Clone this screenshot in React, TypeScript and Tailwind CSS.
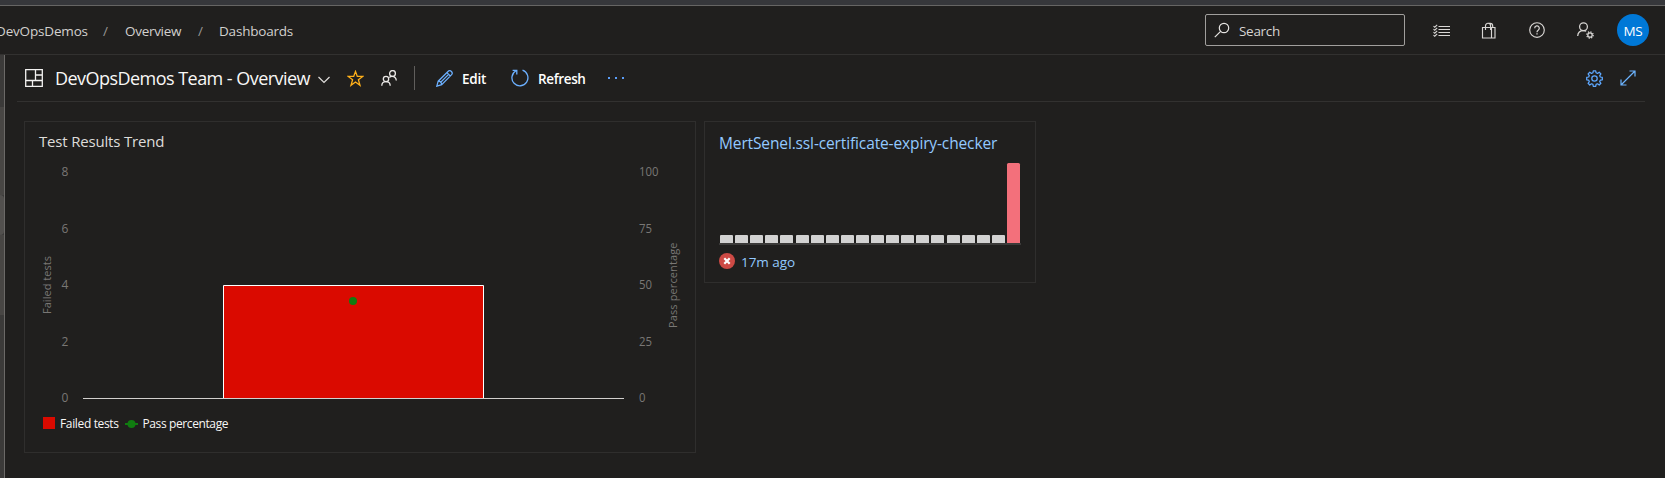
import React from "react";

const leftTicks = [
  { label: "8", y: 176 },
  { label: "6", y: 233 },
  { label: "4", y: 289 },
  { label: "2", y: 346 },
  { label: "0", y: 402 },
];
const rightTicks = [
  { label: "100", y: 176, w: 19.5 },
  { label: "75", y: 233, w: 13 },
  { label: "50", y: 289, w: 13 },
  { label: "25", y: 346, w: 13 },
  { label: "0", y: 402, w: 6.5 },
];

function Crumbs() {
  return (
    <nav className="mt-[2px] flex w-[293px] shrink-0 items-center text-[13.5px] leading-5 text-[#d2d0ce]">
      <span className="-ml-[4px] w-[107px] shrink-0 tracking-[-0.17px]">DevOpsDemos</span>
      <span className="w-[22px] shrink-0 text-[#979593]">/</span>
      <span className="w-[73px] shrink-0 tracking-[-0.3px]">Overview</span>
      <span className="w-[21px] shrink-0 text-[#979593]">/</span>
      <span className="tracking-[-0.2px]">Dashboards</span>
    </nav>
  );
}

function Header() {
  return (
    <header className="flex h-[49px] shrink-0 items-center border-b border-[#323130]">
      <Crumbs />
      <div className="ml-auto flex h-8 w-[200px] shrink-0 items-center rounded-[2px] border border-[#a19f9d] pl-2">
        <svg className="mr-[9px] size-4 shrink-0" viewBox="0 0 16 16" fill="none" stroke="#e6e4e2" strokeWidth="1.2">
          <circle cx="10" cy="6" r="4.7" />
          <path d="M6.6 9.4 0.8 15.2" />
        </svg>
        <span className="mt-[2px] text-[13.5px] leading-5 tracking-[-0.3px] text-[#d6d4d2]">Search</span>
      </div>
      <div className="ml-[28px] flex h-full items-center">
        <svg className="size-[17px]" viewBox="0 0 17 17" fill="none" stroke="#d8d6d4" strokeWidth="1.100">
          <path d="M5.500 4.500H17M5.500 7.500H17M5.500 10.500H17M5.500 13.500H17" />
          <path d="M.5 4.200l1.200 1L4.200 2.800M.5 7.200l1.200 1 2.500-2.400M.5 10.200l1.200 1 2.500-2.400M.5 13.200l1.200 1 2.500-2.400" />
        </svg>
        <svg className="ml-[30px] size-[17px]" viewBox="0 0 17 17" fill="none" stroke="#d8d6d4" strokeWidth="1.150">
          <path d="M2.500 5.500h12.500v10.500h-12.500zM11.500 5.500v10.500M5.500 8V4a2.500 2.500 0 0 1 2.500-2.700c1.700 0 2.600 1.200 2.600 2.700v4M8 1.300h2.200c1.700 0 2.500 1.200 2.500 2.700v1.500" />
        </svg>
        <svg className="ml-[32px] size-4" viewBox="0 0 16 16" fill="none" stroke="#d8d6d4" strokeWidth="1.150">
          <circle cx="8" cy="8" r="7.3" />
          <path d="M5.700 6.300a2.300 2.300 0 1 1 3.500 1.900C8.300 8.800 8 9.200 8 10.200" strokeWidth="1.250" />
          <path d="M8 11.300v1.300" strokeWidth="1.300" />
        </svg>
        <svg className="ml-[32px] size-[17px]" viewBox="0 0 17 17" fill="none" stroke="#d8d6d4" strokeWidth="1.250">
          <circle cx="6.500" cy="4.700" r="3.900" />
          <path d="M.7 14C.9 10.800 3.300 8.700 6.500 8.700c1.200 0 2 .2 2.700.6" />
          <circle cx="13" cy="13" r="2.200" />
          <circle cx="13" cy="13" r="3.200" strokeDasharray="1.250 1.260" />
        </svg>
        <div className="ml-[23px] mr-4 flex size-8 items-center justify-center rounded-full bg-[#0078d7] text-[13.5px] leading-5 tracking-[-0.2px] text-white">
          <span className="mt-px">MS</span>
        </div>
      </div>
    </header>
  );
}

function Toolbar() {
  return (
    <div className="ml-3 mr-5 flex h-[47px] shrink-0 items-center border-b border-[#323130]">
      <svg className="ml-[8px] size-[18px] shrink-0" viewBox="0 0 18 18" fill="none" stroke="#f3f2f1" strokeWidth="1.300">
        <path d="M.7.7h16.600v16.600H.7zM10.500.7v10.800M.7 11.500h16.600M7.500 11.500v5.800M10.500 6h6.800" />
      </svg>
      <h1 className="ml-[12px] w-[263px] shrink-0 whitespace-nowrap text-[18px] leading-6 tracking-[-0.54px] text-[#f8f7f6]">
        DevOpsDemos Team - Overview
      </h1>
      <svg className="mt-[3px] h-[8px] w-[12px] shrink-0" viewBox="0 0 12 8" fill="none" stroke="#e0dedc" strokeWidth="1.200">
        <path d="M.5 1 6 6.500 11.500 1" />
      </svg>
      <svg className="ml-[17px] size-[17px] shrink-0" viewBox="0 0 17 17" fill="none" stroke="#ffb01a" strokeWidth="1.300">
        <path d="m8.500 1.500 1.800 4.900h5.500l-4.400 3.400 1.600 5.500-4.500-3.300L4 15.300l1.600-5.500L1.200 6.400h5.500z" />
      </svg>
      <svg className="ml-[17px] size-4 shrink-0" viewBox="0 0 16 16" fill="none" stroke="#eceae8" strokeWidth="1.300">
        <circle cx="11.500" cy="3.500" r="2.900" />
        <circle cx="5" cy="9" r="2.700" />
        <path d="M.8 15.800c0-2.600 1.700-4.100 4.200-4.100s4.200 1.500 4.200 4.100M8.300 7.500c.8-.7 1.700-1.100 2.700-1.100 2.500 0 4.100 1.600 4.300 4.100" />
      </svg>
      <div className="ml-[17px] h-6 w-px shrink-0 bg-[#605e5c]" />
      <svg className="ml-[21px] size-[17px] shrink-0" viewBox="0 0 17 17" fill="none" stroke="#6cb0ff" strokeWidth="1.250">
        <path d="m.8 16.200 1.400-5L12 1.500a2.300 2.300 0 0 1 3.400 3.400L5.700 14.700zM10.900 2.600l3.400 3.400M2.200 11.200c1.900 0 3.300 1.300 3.500 3.500M4.200 12.800l7.900-7.900" />
      </svg>
      <span className="ml-[9px] mt-[2px] w-[49px] shrink-0 text-[13.5px] font-semibold leading-5 tracking-[-0.2px] text-white">Edit</span>
      <svg className="size-[18px] shrink-0" viewBox="0 0 18 18" fill="none" stroke="#6cb0ff" strokeWidth="1.300">
        <path d="M11.500 1.200a8 8 0 1 1-6.500.6M1.600 1.400h4.200v4.200" />
      </svg>
      <span className="ml-[9px] mt-[2px] w-[70px] shrink-0 text-[13.5px] font-semibold leading-5 tracking-[-0.35px] text-white">Refresh</span>
      <svg className="h-[2px] w-4 shrink-0" viewBox="0 0 16 2" fill="#5a9df8">
        <path d="M0 0h2v2H0zM7 0h2v2H7zM14 0h2v2h-2z" />
      </svg>
      <svg className="ml-auto size-[17px] shrink-0" viewBox="0 0 17 17" fill="none" stroke="#5ea8ff" strokeWidth="1.250" strokeLinejoin="round">
        <path d="M7.300.8h2.400l.4 2 1.400.6 1.700-1.200 1.700 1.700-1.200 1.700.6 1.400 2 .4v2.400l-2 .4-.6 1.400 1.200 1.700-1.700 1.700-1.700-1.200-1.400.6-.4 2H7.300l-.4-2-1.400-.6-1.700 1.200-1.700-1.700 1.200-1.700-.6-1.400-2-.4V7.400l2-.4.6-1.400-1.200-1.700 1.700-1.700 1.700 1.200L6.900 2.800z" />
        <circle cx="8.500" cy="8.500" r="2.700" />
      </svg>
      <svg className="ml-[17px] mr-[9px] size-4 shrink-0" viewBox="0 0 16 16" fill="none" stroke="#6cb4ff" strokeWidth="1.200">
        <path d="M1 15 15 1M9.500 1H15v5.500M1 9.500V15h5.500" />
      </svg>
    </div>
  );
}

function TrendCard() {
  return (
    <section className="h-[332px] w-[672px] shrink-0 border border-[#2f2e2d]">
      <h2 className="ml-[14px] mt-[9px] mb-px h-5 text-[15px] leading-5 tracking-[-0.18px] text-[#dedcda]">Test Results Trend</h2>
      <svg className="block h-[300px] w-[670px]" viewBox="25 152 670 300" fontSize="12" fill="#797775">
        {leftTicks.map((t) => (
          <text key={t.label} x="61.500" y={t.y}>{t.label}</text>
        ))}
        {rightTicks.map((t) => (
          <text key={t.label} x="639" y={t.y} textLength={t.w} lengthAdjust="spacingAndGlyphs">{t.label}</text>
        ))}
        <text transform="translate(51 314) rotate(-90)" fontSize="11" textLength="58">Failed tests</text>
        <text transform="translate(677 328) rotate(-90)" fontSize="11" textLength="85.500">Pass percentage</text>
        <path d="M223.500 398V285.500h260V398" fill="#da0a00" stroke="#fff" />
        <path d="M83 398.500h541" stroke="#d2d0ce" />
        <circle cx="353" cy="301" r="4" fill="#107c10" />
        <path d="M43 417h12v12H43z" fill="#da0a00" />
        <text x="60" y="428" fill="#f8f7f6" textLength="59">Failed tests</text>
        <path d="M125 424h13" stroke="#107c10" strokeWidth="2" />
        <circle cx="131.500" cy="424" r="4" fill="#107c10" />
        <text x="142.500" y="428" fill="#f8f7f6" textLength="86">Pass percentage</text>
      </svg>
    </section>
  );
}

function BuildCard() {
  return (
    <section className="ml-[8px] h-[162px] w-[332px] shrink-0 border border-[#2f2e2d] pl-[14px]">
      <h2 className="mt-[11px] h-5 whitespace-nowrap text-[15.5px] leading-5 tracking-[-0.13px] text-[#93c9ff]">
        MertSenel.ssl-certificate-expiry-checker
      </h2>
      <svg className="mt-[10px] block h-[82px] w-[302px]" viewBox="0 0 302 82">
        {Array.from({ length: 19 }, (_, i) => {
          const x = Math.round(1 + i * 15.100);
          return <path key={i} d={`M${x} 80v-7q0-1 1-1h11q1 0 1 1v7z`} fill="#d2d2d2" />;
        })}
        <path d="M288 80V1.500q0-1.500 1.500-1.500h10q1.500 0 1.500 1.500V80z" fill="#f3707b" />
        <path d="M0 80h302v2H0z" fill="#3b3a39" />
      </svg>
      <div className="mt-[8px] flex h-4 items-center">
        <svg className="size-4" viewBox="0 0 16 16">
          <circle cx="8" cy="8" r="8" fill="#cd4a45" />
          <path d="m5.300 5.300 5.400 5.400m0-5.400-5.400 5.400" stroke="#fff" strokeWidth="2.200" />
        </svg>
        <span className="ml-[6px] mt-[2px] text-[13.5px] leading-5 tracking-[-0.05px] text-[#93c9ff]">17m ago</span>
      </div>
    </section>
  );
}

export default function App() {
  return (
    <div className="flex h-[478px] w-[1665px] flex-col overflow-hidden bg-[#201f1e] font-['Open_Sans','Noto_Sans',sans-serif]">
      <div className="h-[6px] shrink-0 border-b border-[#666564] bg-[#36373b]" />
      <Header />
      <div className="flex min-h-0 flex-1">
        <aside className="flex w-[5px] shrink-0 flex-col border-r border-[#6b6967] bg-[#3b3a39]">
          <div className="mt-[52px] h-[88px] bg-[#484644]" />
          <div className="h-10 rounded-r-sm bg-[#52504e]" />
          <div className="h-[80px] bg-[#484644]" />
        </aside>
        <main className="flex min-w-0 flex-1 flex-col">
          <Toolbar />
          <div className="ml-[19px] mt-[19px] flex items-start">
            <TrendCard />
            <BuildCard />
          </div>
        </main>
      </div>
    </div>
  );
}
